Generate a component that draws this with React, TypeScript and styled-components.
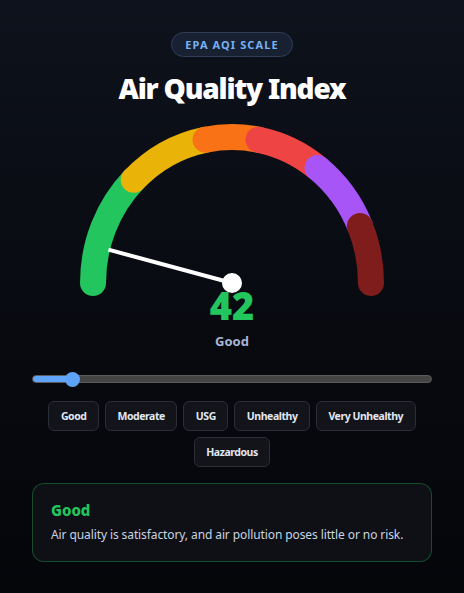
import React, { useState } from "react";
import styled, { createGlobalStyle } from "styled-components";

const GlobalStyle = createGlobalStyle`
  html, body {
    margin: 0;
    padding: 0;
  }
  body {
    min-height: 100vh;
    background: linear-gradient(180deg, #0e121c 0%, #080a10 55%, #05060a 100%);
    font-family: "Noto Sans", "Open Sans", sans-serif;
    color: #e5e7eb;
  }
`;

const Page = styled.main`
  width: 400px;
  margin: 0 auto;
  padding: 32px 0 24px;
  display: flex;
  flex-direction: column;
  align-items: center;
`;

const Badge = styled.div`
  box-sizing: border-box;
  height: 25px;
  padding: 0 13px;
  display: flex;
  align-items: center;
  border-radius: 999px;
  border: 1px solid #2f3e56;
  background: #172131;
  color: #79b1f6;
  font-size: 11px;
  font-weight: 700;
  letter-spacing: 1.1px;
`;

const Title = styled.h1`
  margin: 13px 0 0;
  font-size: 28px;
  line-height: 36px;
  font-weight: 900;
  color: #ffffff;
  letter-spacing: -1.2px;
`;

const Dial = styled.svg`
  display: block;
  margin-top: 4px;
  overflow: visible;
`;

const Reading = styled.div<{ $tone: string }>`
  font-size: 38px;
  line-height: 38px;
  font-weight: 900;
  color: ${(p) => p.$tone};
`;

const Level = styled.div`
  margin-top: 8px;
  font-size: 13px;
  line-height: 18px;
  font-weight: 700;
  color: #a6b6d6;
`;

const Range = styled.input`
  appearance: none;
  -webkit-appearance: none;
  display: block;
  width: 100%;
  height: 16px;
  margin: 21px 0 0;
  background: transparent;
  cursor: pointer;

  &::-webkit-slider-runnable-track {
    height: 8px;
    border-radius: 4px;
    box-sizing: border-box;
    border: 1px solid #5a5a5a;
    background: linear-gradient(
      90deg,
      #60a5fa 0,
      #60a5fa var(--fill),
      #444444 var(--fill),
      #444444 100%
    );
  }
  &::-webkit-slider-thumb {
    -webkit-appearance: none;
    width: 15px;
    height: 15px;
    margin-top: -4.5px;
    border-radius: 50%;
    background: #5ea2f7;
    border: none;
  }
`;

const Chips = styled.div`
  margin-top: 14px;
  display: flex;
  flex-wrap: wrap;
  justify-content: center;
  gap: 6px;
  width: 100%;
`;

const Chip = styled.button`
  box-sizing: border-box;
  height: 30px;
  padding: 0 11.5px;
  border-radius: 6px;
  border: 1px solid #2b2e35;
  background: #121419;
  color: #e1e8f4;
  font-family: inherit;
  font-size: 10.5px;
  font-weight: 700;
  letter-spacing: -0.45px;
  cursor: pointer;
`;

const Card = styled.section<{ $tone: string }>`
  box-sizing: border-box;
  width: 100%;
  margin-top: 16px;
  padding: 16px 18px 17px;
  border-radius: 12px;
  border: 1px solid ${(p) => p.$tone}55;
  background: #0e1015;
`;

const CardTitle = styled.h2<{ $tone: string }>`
  margin: 0;
  font-size: 15px;
  line-height: 20px;
  font-weight: 800;
  color: ${(p) => p.$tone};
`;

const CardText = styled.p`
  margin: 6px 0 0;
  font-size: 12px;
  line-height: 18px;
  color: #c9d3e3;
  letter-spacing: -0.1px;
`;

type Band = {
  name: string;
  max: number;
  color: string;
  from: number;
  to: number;
  note: string;
};

const BANDS: Band[] = [
  { name: "Good", max: 50, color: "#22c55e", from: 0, to: 45, note: "Air quality is satisfactory, and air pollution poses little or no risk." },
  { name: "Moderate", max: 100, color: "#eab308", from: 45, to: 79, note: "Air quality is acceptable; some pollutants may be a concern for very sensitive people." },
  { name: "USG", max: 150, color: "#f97316", from: 79, to: 101, note: "Members of sensitive groups may experience health effects." },
  { name: "Unhealthy", max: 200, color: "#ef4444", from: 101, to: 128, note: "Some members of the general public may experience health effects." },
  { name: "Very Unhealthy", max: 300, color: "#a855f7", from: 128, to: 157, note: "Health alert: the risk of health effects is increased for everyone." },
  { name: "Hazardous", max: 500, color: "#7f1d1d", from: 157, to: 180, note: "Health warning of emergency conditions: everyone is more likely to be affected." },
];

// Dial geometry: a slightly tall half-ellipse, pivot at its centre.
const CX = 160;
const CY = 173;
const RX = 139;
const RY = 146;

const point = (deg: number) => {
  const r = (deg * Math.PI) / 180;
  return [CX - RX * Math.cos(r), CY - RY * Math.sin(r)];
};

const arcPath = (a: number, b: number) => {
  const [x1, y1] = point(a);
  const [x2, y2] = point(b);
  return `M ${x1.toFixed(2)} ${y1.toFixed(2)} A ${RX} ${RY} 0 0 1 ${x2.toFixed(2)} ${y2.toFixed(2)}`;
};

const bandFor = (v: number) => BANDS.find((b) => v <= b.max) ?? BANDS[BANDS.length - 1];

export default function App() {
  const [aqi, setAqi] = useState(42);
  const band = bandFor(aqi);
  const angle = (aqi / 500) * 180;
  const r = (angle * Math.PI) / 180;
  const tipX = CX - 128 * Math.cos(r);
  const tipY = CY - 128 * Math.sin(r);
  const fill = `${(7.5 + (aqi / 500) * 385).toFixed(1)}px`;

  return (
    <>
      <GlobalStyle />
      <Page>
        <Badge>EPA AQI SCALE</Badge>
        <Title>Air Quality Index</Title>
        <Dial width={320} height={176} viewBox="0 0 320 176">
          {BANDS.map((b) => (
            <path
              key={b.name}
              d={arcPath(b.from, b.to)}
              fill="none"
              stroke={b.color}
              strokeWidth={26}
              strokeLinecap="round"
            />
          ))}
          <line x1={CX} y1={CY} x2={tipX} y2={tipY} stroke="#ffffff" strokeWidth={4} />
          <circle cx={CX} cy={CY} r={10} fill="#ffffff" />
        </Dial>
        <Reading $tone={band.color}>{aqi}</Reading>
        <Level>{band.name}</Level>
        <Range
          type="range"
          min={0}
          max={500}
          value={aqi}
          onChange={(e) => setAqi(Number(e.target.value))}
          style={{ ["--fill" as string]: fill } as React.CSSProperties}
        />
        <Chips>
          {BANDS.map((b) => (
            <Chip key={b.name} onClick={() => setAqi(Math.round(b.max - 8))}>
              {b.name}
            </Chip>
          ))}
        </Chips>
        <Card $tone={band.color}>
          <CardTitle $tone={band.color}>{band.name}</CardTitle>
          <CardText>{band.note}</CardText>
        </Card>
      </Page>
    </>
  );
}
